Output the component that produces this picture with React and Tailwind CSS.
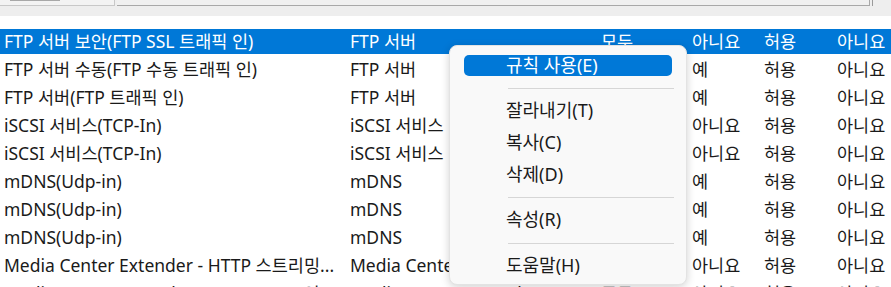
import React from "react";

const rows = [
  ["FTP 서버 보안(FTP SSL 트래픽 인)", "FTP 서버", "모두", "아니요", "허용", "아니요"],
  ["FTP 서버 수동(FTP 수동 트래픽 인)", "FTP 서버", "모두", "예", "허용", "아니요"],
  ["FTP 서버(FTP 트래픽 인)", "FTP 서버", "모두", "예", "허용", "아니요"],
  ["iSCSI 서비스(TCP-In)", "iSCSI 서비스", "모두", "아니요", "허용", "아니요"],
  ["iSCSI 서비스(TCP-In)", "iSCSI 서비스", "모두", "아니요", "허용", "아니요"],
  ["mDNS(Udp-in)", "mDNS", "모두", "예", "허용", "아니요"],
  ["mDNS(Udp-in)", "mDNS", "모두", "예", "허용", "아니요"],
  ["mDNS(Udp-in)", "mDNS", "모두", "예", "허용", "아니요"],
  ["Media Center Extender - HTTP 스트리밍...", "Media Center Extender", "모두", "아니요", "허용", "아니요"],
  ["Media Center Extender - qWave-TCP 인", "Media Center Extender", "모두", "아니요", "허용", "아니요"],
];

function Row({ cells, selected }) {
  return (
    <div className="h-[28px] pt-[2px]">
      <div
        className={
          "flex h-[25px] items-center whitespace-nowrap " +
          (selected ? "bg-[#0078d7] text-white" : "text-[#1a1a1a]")
        }
      >
        <div className="w-[350px] shrink-0 overflow-hidden pl-[4px]">{cells[0]}</div>
        <div className="w-[251px] shrink-0 overflow-hidden">{cells[1]}</div>
        <div className="w-[91px] shrink-0">{cells[2]}</div>
        <div className="w-[72px] shrink-0">{cells[3]}</div>
        <div className="w-[73px] shrink-0">{cells[4]}</div>
        <div className="shrink-0">{cells[5]}</div>
      </div>
    </div>
  );
}

function Sep() {
  return <div className="ml-[58px] mr-[12px] h-px bg-[#d6d6d6]" />;
}

function MenuItem({ label, active }) {
  return (
    <div
      className={
        "mx-[14px] flex h-[21px] items-center rounded-[5px] pl-[42px] " +
        (active ? "bg-[#0078d7] text-white" : "text-[#1a1a1a]")
      }
    >
      {label}
    </div>
  );
}

function ContextMenu() {
  return (
    <div className="absolute left-[449px] top-[45px] w-[238px] h-[240px] rounded-[8px] border border-[#e3e3e3] bg-[#f9f9f9] shadow-[0_2px_8px_rgba(0,0,0,0.18)] pt-[9px] text-[18px]">
      <MenuItem label="규칙 사용(E)" active />
      <div className="h-[12px]" />
      <Sep />
      <div className="h-[11px]" />
      <MenuItem label="잘라내기(T)" />
      <div className="h-[11px]" />
      <MenuItem label="복사(C)" />
      <div className="h-[11px]" />
      <MenuItem label="삭제(D)" />
      <div className="h-[12px]" />
      <Sep />
      <div className="h-[11px]" />
      <MenuItem label="속성(R)" />
      <div className="h-[13px]" />
      <Sep />
      <div className="h-[11px]" />
      <MenuItem label="도움말(H)" />
    </div>
  );
}

export default function App() {
  return (
    <div
      className="relative h-[287px] w-[891px] overflow-hidden bg-white text-[17.5px]"
      style={{ fontFamily: '"Noto Sans", "Noto Sans CJK KR", sans-serif' }}
    >
      {/* toolbar strip */}
      <div className="h-[16px] bg-[#eeeeee]">
        <div className="flex h-[6px]">
          <div className="w-[115px] border-b border-r border-[#c8c8c8] bg-[#f3f3f3] pl-[10px]">
            <div className="h-[1px] w-[50px] bg-[#a8a8a8]" />
          </div>
          <div className="ml-[2px] w-[753px] border-b border-r border-[#a8a8a8] bg-[#f0f0f0]" />
          <div className="ml-[2px] w-px bg-[#9a9a9a]" />
        </div>
      </div>
      <div className="h-[11px]" />
      {rows.map((r, i) => (
        <Row key={i} cells={r} selected={i === 0} />
      ))}
      <ContextMenu />
    </div>
  );
}
